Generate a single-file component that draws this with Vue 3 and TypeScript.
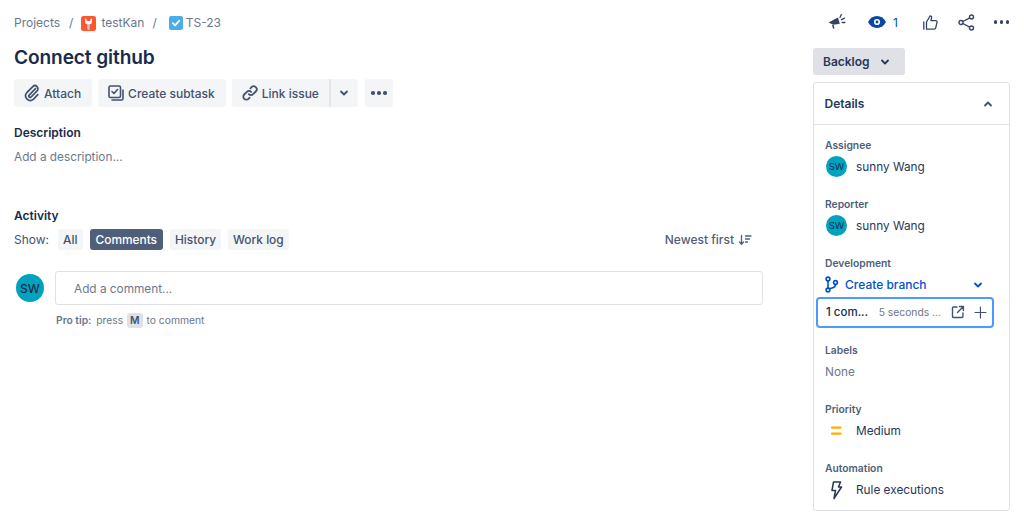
<template>
  <div class="page">
    <main class="main">
      <nav class="crumbs">
        <span>Projects</span>
        <span class="sep">/</span>
        <svg class="crumb-icon" width="15" height="15" viewBox="0 0 15 15">
          <rect width="15" height="15" rx="2.5" fill="#ff5630" />
          <path d="M6.200 7.500h2.600V13a1 1 0 0 1-1 1H7.200a1 1 0 0 1-1-1z" fill="#c1c7d0" />
          <path d="M4 2v3.700c0 1.300.9 2.300 2.200 2.500h2.600C10.100 8 11 7 11 5.700V2L9.200 3.800V5H5.800V3.800z" fill="#fff" />
        </svg>
        <span>testKan</span>
        <span class="sep sep-b">/</span>
        <svg class="crumb-icon crumb-icon-b" width="14" height="14" viewBox="0 0 14 14">
          <rect width="14" height="14" rx="2" fill="#4bade8" />
          <path d="M3.800 7.200l2.300 2.200 4.200-4.700" fill="none" stroke="#fff" stroke-width="1.800" stroke-linecap="round" stroke-linejoin="round" />
        </svg>
        <span>TS-23</span>
      </nav>
      <h1 class="title">Connect github</h1>
      <div class="actions">
        <button class="btn">
          <svg width="18" height="18" viewBox="0 0 18 18" fill="none" stroke="#42526e" stroke-width="1.700" stroke-linecap="round">
            <path d="M12.500 5.200l-6.300 6.500a1.300 1.300 0 0 0 1.900 1.800l6-6.200a3 3 0 0 0-4.300-4.200L3.600 9.400a4.700 4.700 0 0 0 6.700 6.500l4.500-4.700" transform="translate(0 -.5)" />
          </svg>
          Attach
        </button>
        <button class="btn">
          <svg width="18" height="18" viewBox="0 0 18 18" fill="none" stroke="#42526e" stroke-width="1.600" stroke-linecap="round" stroke-linejoin="round">
            <rect x="2" y="2" width="11.500" height="11.500" rx="1.500" />
            <path d="M5 7.500l2 2 3.500-4M16 6v8.500a1.500 1.500 0 0 1-1.500 1.500H5" />
          </svg>
          Create subtask
        </button>
        <div class="split">
          <button class="btn split-main">
            <svg width="18" height="18" viewBox="0 0 18 18" fill="none" stroke="#42526e" stroke-width="1.800" stroke-linecap="round">
              <path d="M7.800 10.200a3 3 0 0 0 4.300 0l2.700-2.700a3 3 0 0 0-4.300-4.300L9.400 4.300" />
              <path d="M10.200 7.800a3 3 0 0 0-4.300 0l-2.700 2.700a3 3 0 0 0 4.300 4.300l1.100-1.100" />
            </svg>
            Link issue
          </button>
          <button class="btn split-caret">
            <svg width="10" height="8" viewBox="0 0 10 8" fill="none" stroke="#42526e" stroke-width="1.800" stroke-linecap="round" stroke-linejoin="round"><path d="M2 2.500l3 3 3-3" /></svg>
          </button>
        </div>
        <button class="btn more">
          <span class="dots"><i /><i /><i /></span>
        </button>
      </div>

      <h2 class="desc-label">Description</h2>
      <p class="desc-text">Add a description...</p>

      <h2 class="act-label">Activity</h2>
      <div class="filters">
        <span class="show">Show:</span>
        <button v-for="f in filters" :key="f" class="chip" :class="{ on: f === 'Comments' }">{{ f }}</button>
        <span class="sort">
          Newest first
          <svg width="14" height="12" viewBox="0 0 14 12" fill="none" stroke="#505f79" stroke-width="1.300" stroke-linecap="round" stroke-linejoin="round">
            <path d="M3.500 1.500v8.500M1.500 8l2 2.200L5.500 8M7.500 2h5.500M7.500 5h4M7.500 8h2" />
          </svg>
        </span>
      </div>

      <div class="comment">
        <span class="avatar big">SW</span>
        <div class="comment-body">
          <div class="comment-input">Add a comment...</div>
          <p class="tip"><b>Pro tip:</b> press <kbd>M</kbd> to comment</p>
        </div>
      </div>
    </main>

    <aside class="side">
      <div class="top-icons">
        <svg class="i-mega" width="20" height="20" viewBox="0 0 20 20" fill="#344563">
          <path d="M1.500 10.500L11 5.500l1.800 6.200-6.300 1z" />
          <path d="M5 13l1.600-.3.800 3.800-1.300.3z" />
          <path d="M13 5.500L14.300 2.500M14.500 7.700l3-1.500M15.200 10.500h2.800" stroke="#344563" stroke-width="1.300" stroke-linecap="round" fill="none" />
        </svg>
        <span class="watch">
          <svg width="18" height="12" viewBox="0 0 18 12">
            <path d="M0 6c2-3.700 5-6 9-6s7 2.300 9 6c-2 3.700-5 6-9 6S2 9.700 0 6z" fill="#0747a6" />
            <circle cx="9" cy="6" r="3.100" fill="#fff" />
            <circle cx="9" cy="6" r="1.400" fill="#0747a6" />
          </svg>
          <span>1</span>
        </span>
        <svg class="i-thumb" width="15" height="15" viewBox="0 0 15 15" fill="none" stroke="#344563" stroke-width="1.300" stroke-linejoin="round" stroke-linecap="round">
          <path d="M.8 7v7.200M3.500 7L7 1c1.200-.2 1.800.6 1.600 1.700L8 5.700h4.700c.9 0 1.600.8 1.300 1.700l-1.300 5.500c-.2.800-.8 1.300-1.600 1.300H3.500z" />
        </svg>
        <svg class="i-share" width="17" height="17" viewBox="0 0 17 17" fill="none" stroke="#344563" stroke-width="1.400">
          <circle cx="3" cy="8.500" r="2" />
          <circle cx="13.500" cy="3" r="2" />
          <circle cx="13.500" cy="14" r="2" />
          <path d="M4.800 7.500l7-3.600M4.800 9.500l7 3.600" />
        </svg>
        <span class="dots top-dots"><i /><i /><i /></span>
      </div>

      <button class="status">
        Backlog
        <svg width="10" height="8" viewBox="0 0 10 8" fill="none" stroke="#253858" stroke-width="1.800" stroke-linecap="round" stroke-linejoin="round"><path d="M2 2.500l3 3 3-3" /></svg>
      </button>

      <section class="details">
        <header class="details-head">
          <span>Details</span>
          <svg width="10" height="8" viewBox="0 0 10 8" fill="none" stroke="#42526e" stroke-width="1.800" stroke-linecap="round" stroke-linejoin="round"><path d="M2 5.500l3-3 3 3" /></svg>
        </header>
        <div class="fields">
          <div class="field">
            <div class="f-label">Assignee</div>
            <div class="f-row"><span class="avatar">SW</span>sunny Wang</div>
          </div>
          <div class="field">
            <div class="f-label">Reporter</div>
            <div class="f-row"><span class="avatar">SW</span>sunny Wang</div>
          </div>
          <div class="field dev">
            <div class="f-label">Development</div>
            <div class="f-row branch">
              <svg width="14" height="17" viewBox="0 0 14 17" fill="none" stroke="#0052cc" stroke-width="1.600">
                <circle cx="3" cy="3" r="1.900" />
                <circle cx="3" cy="14" r="1.900" />
                <circle cx="10.500" cy="6.500" r="1.900" />
                <path d="M3 4.900v7.200M10.500 8.400c0 2.600-1.700 3.200-3.500 3.600-1.500.3-3 .5-3.700.9" />
              </svg>
              <span class="branch-text">Create branch</span>
              <svg class="branch-caret" width="10" height="8" viewBox="0 0 10 8" fill="none" stroke="#0052cc" stroke-width="1.800" stroke-linecap="round" stroke-linejoin="round"><path d="M2 2.500l3 3 3-3" /></svg>
            </div>
            <div class="commit">
              <span class="commit-count">1 com...</span>
              <span class="commit-time">5 seconds ...</span>
              <svg width="14" height="14" viewBox="0 0 14 14" fill="none" stroke="#42526e" stroke-width="1.400" stroke-linecap="round" stroke-linejoin="round">
                <path d="M6 2H2.500a1 1 0 0 0-1 1v8.500a1 1 0 0 0 1 1H11a1 1 0 0 0 1-1V8M8.500 1.500h4v4M12.500 1.500L6.500 7.500" />
              </svg>
              <svg class="commit-plus" width="13" height="13" viewBox="0 0 13 13" fill="none" stroke="#42526e" stroke-width="1.200" stroke-linecap="round"><path d="M6.500 1v11M1 6.500h11" /></svg>
            </div>
          </div>
          <div class="field">
            <div class="f-label">Labels</div>
            <div class="f-row none">None</div>
          </div>
          <div class="field">
            <div class="f-label">Priority</div>
            <div class="f-row">
              <svg class="f-icon" width="24" height="12" viewBox="0 0 24 12" fill="#ffab00"><rect x="7" y="1.500" width="10.500" height="2.300" rx="1" /><rect x="7" y="7.500" width="10.500" height="2.300" rx="1" /></svg>
              Medium
            </div>
          </div>
          <div class="field">
            <div class="f-label">Automation</div>
            <div class="f-row">
              <svg class="f-icon" width="24" height="20" viewBox="0 0 24 20" fill="none" stroke="#253858" stroke-width="1.500" stroke-linejoin="round">
                <path d="M9.500 2h7l-2 5h3l-7.500 11.500 1.500-8h-3.500z" />
              </svg>
              Rule executions
            </div>
          </div>
        </div>
      </section>
    </aside>
  </div>
</template>

<script setup lang="ts">
const filters: string[] = ["All", "Comments", "History", "Work log"];
</script>

<style>
html, body { margin: 0; background: #fff; }
</style>

<style scoped>
.page{display:flex;width:1024px;height:512px;overflow:hidden;font-family:Inter,"Noto Sans",sans-serif;font-size:12px;color:#172b4d;box-sizing:border-box}
.main{width:763px;padding:0 0 0 14px;box-sizing:border-box;flex:none}
.crumbs{display:flex;align-items:center;height:16px;margin-top:15px;color:#6b778c;font-size:12px;line-height:16px}
.sep{margin:0 8px 0 9px}
.sep-b{margin:0 12px 0 8px}
.crumb-icon{margin-right:5px;flex:none}
.crumb-icon-b{margin-right:3px}
.title{margin:12px 0 0;font-size:19.100px;line-height:28px;font-weight:600;color:#172b4d;letter-spacing:-.1px}
.actions{display:flex;gap:6px;margin-top:8px}
.btn{display:flex;align-items:center;gap:3px;height:28px;border:0;border-radius:3px;background:#f4f5f7;color:#42526e;font:500 12px Inter,sans-serif;padding:0 11px 0 9px;white-space:nowrap}
.split{display:flex}
.split-main{border-radius:3px 0 0 3px;padding-right:10px;border-right:2px solid #e4e6ea}
.split-caret{border-radius:0 3px 3px 0;padding:0 8.500px}
.more{width:28px;padding:0;justify-content:center;margin-left:1px}
.dots{display:inline-flex;gap:2.500px}
.dots i{width:3.500px;height:3.500px;border-radius:50%;background:#42526e}
h2{margin:0;font-size:12px;font-weight:600;color:#172b4d;line-height:16px}
.desc-label{margin-top:18px}
.desc-text{margin:8px 0 0;color:#6b778c;font-size:11.800px;line-height:16px}
.act-label{margin-top:43px}
.filters{display:flex;align-items:center;margin-top:5px;height:21px}
.show{color:#42526e;margin-right:9px;font-size:12px}
.chip{height:21px;border:0;border-radius:3px;background:#f4f5f7;color:#42526e;font:500 11.900px Inter,sans-serif;padding:0 5px;margin-right:7px;white-space:nowrap}
.chip.on{background:#505f79;color:#fff;padding:0 6px}
.sort{margin-left:auto;display:flex;align-items:center;gap:4px;color:#505f79;font-weight:500;font-size:12px;margin-right:11px}
.comment{display:flex;margin-top:21px}
.avatar{display:inline-flex;align-items:center;justify-content:center;width:21px;height:21px;border-radius:50%;background:#00a3bf;color:#172b4d;font-size:9.500px;flex:none}
.avatar.big{width:28px;height:28px;font-size:12px;font-weight:500;margin:3px 11px 0 2px}
.comment-body{flex:1}
.comment-input{height:34px;border:1px solid #dfe1e6;border-radius:3px;box-sizing:border-box;display:flex;align-items:center;padding:1px 0 0 18px;color:#6b778c;font-size:11.800px;width:708px}
.tip{margin:7px 0 0 1px;font-size:10.300px;line-height:16px;color:#6b778c}
.tip b{font-weight:600;margin-right:2px}
kbd{display:inline-block;background:#dfe1e6;color:#42526e;border-radius:3px;font:600 10.300px Inter,sans-serif;padding:0 3px;margin:0 1px;line-height:15px}
.side{margin-left:50px;width:197px;flex:none}
.top-icons{display:flex;align-items:center;height:20px;margin-top:12px;margin-left:14px}
.i-mega{margin-right:21px;flex:none}
.watch{display:flex;align-items:center;gap:7px;color:#0052cc;font-size:12px;margin-right:25px;width:30px}
.i-thumb{margin-right:20px;flex:none}
.i-share{margin-right:19px;flex:none}
.top-dots{gap:2.500px}
.top-dots i{width:3.300px;height:3.300px;background:#344563}
.status{display:flex;align-items:center;gap:10px;height:27px;width:92px;margin-top:16px;border:0;border-radius:3px;background:#dfe1e6;color:#253858;font:600 12px Inter,sans-serif;padding:0 10px}
.details{margin-top:7px;height:429px;border:1px solid #dfe1e6;border-radius:3px;box-sizing:border-box;overflow:hidden}
.details-head{display:flex;justify-content:space-between;align-items:center;height:41px;padding:0 16px 0 10.500px;border-bottom:1px solid #dfe1e6;font-weight:600;font-size:12px;color:#253858}
.fields{padding-top:12px;display:flex;flex-direction:column}
.field{padding:0 11px;height:59px}
.field.dev{height:87px}
.f-label{font-size:10.300px;font-weight:600;color:#505f79;line-height:16px}
.f-row{display:flex;align-items:center;gap:9px;height:21px;margin-top:3px;font-size:11.800px;color:#253858;margin-left:1px}
.f-row.none{color:#6b778c;margin-left:0}
.f-icon{margin-left:-2px;margin-right:-1px;flex:none}
.branch{color:#0052cc;font-weight:500;gap:6px;margin-left:0;font-size:12px}
.branch-text{width:122px}
.branch-caret{flex:none}
.commit{display:flex;align-items:center;height:31px;width:178px;margin:2px 0 0 -9px;border:2px solid #4c9aff;border-radius:4px;box-sizing:border-box;padding:0 5px 1px 8px;white-space:nowrap}
.commit-count{font-weight:500;color:#172b4d;width:45px;font-size:11.500px}
.commit-time{color:#6b778c;font-size:10.300px;width:73px;margin-left:8px}
.commit-plus{margin-left:9px}
</style>
